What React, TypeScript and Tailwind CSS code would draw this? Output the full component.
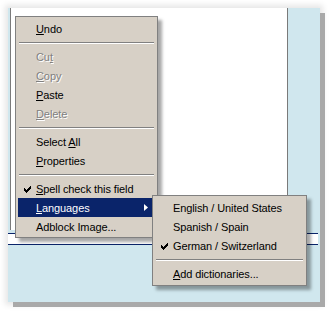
import { FC, ReactNode } from "react";

const Check: FC<{ white?: boolean }> = ({ white }) => (
  <svg width="7" height="7" viewBox="0 0 7 7" shapeRendering="crispEdges" className="block">
    <path
      d="M6 0h1v3h-1zM5 1h1v3h-1zM4 2h1v3h-1zM3 3h1v3h-1zM2 4h1v3h-1zM1 3h1v3h-1zM0 2h1v3h-1z"
      fill={white ? "#fff" : "#000"}
    />
  </svg>
);

const Arrow = () => (
  <svg width="4" height="7" viewBox="0 0 4 7" className="block">
    <polygon points="0,0 4,3.5 0,7" fill="#fff" />
  </svg>
);

interface ItemProps {
  children: ReactNode;
  disabled?: boolean;
  checked?: boolean;
  active?: boolean;
  submenu?: boolean;
  width: string;
}

const Item: FC<ItemProps> = ({ children, disabled, checked, active, submenu, width }) => (
  <div
    className={`relative flex h-[19px] items-center ${width} ${
      active ? "bg-[#0a246a] text-white" : disabled ? "text-[#808080] [text-shadow:1px_1px_0_#ffffff]" : "text-black"
    }`}
  >
    <span className="flex w-[18px] justify-center pl-[1px] pt-[1px]">{checked && <Check white={active} />}</span>
    <span className="flex-1 whitespace-nowrap pt-[2px] leading-none tracking-[-0.1px]">{children}</span>
    {submenu && (
      <span className="mr-[4px]">
        <Arrow />
      </span>
    )}
  </div>
);

const Separator: FC<{ width: string }> = ({ width }) => (
  <div className={`h-[9px] pt-[4px] ml-[1px] ${width}`}>
    <div className="h-[1px] bg-[#808080]" />
    <div className="h-[1px] bg-white" />
  </div>
);

export default function App() {
  return (
    <div className="relative h-[316px] w-[334px] overflow-hidden bg-white font-['Liberation_Sans',Arial,sans-serif] text-[11px]">
      {/* page behind the menus */}
      <div className="ml-[8px] mt-[8px] h-[294px] w-[312px] bg-[#d0e7ee] shadow-[5px_5px_0_#a9a9a9,0_0_6px_3px_#e6e6e6]">
        <div className="ml-[2px] h-[222px] w-[278px] border-x border-[#7a7a7a] bg-white" />
        <div className="mt-[3px] h-[12px] w-[310px] border-y border-[#0a246a] bg-white" />
      </div>

      {/* context menu */}
      <div className="absolute left-[15px] top-[16px] w-[143px] border border-[#808080] bg-[#d7d0c6] pl-[2px] pt-[2px] pb-[1px] shadow-[4px_4px_3px_rgba(0,0,0,0.35)]">
        <Item width="w-[134px]">
          <u>U</u>ndo
        </Item>
        <Separator width="w-[135px]" />
        <Item width="w-[134px]" disabled>
          Cu<u>t</u>
        </Item>
        <Item width="w-[134px]" disabled>
          <u>C</u>opy
        </Item>
        <Item width="w-[134px]">
          <u>P</u>aste
        </Item>
        <Item width="w-[134px]" disabled>
          <u>D</u>elete
        </Item>
        <Separator width="w-[135px]" />
        <Item width="w-[134px]">
          Select <u>A</u>ll
        </Item>
        <Item width="w-[134px]">
          <u>P</u>roperties
        </Item>
        <Separator width="w-[135px]" />
        <Item width="w-[134px]" checked>
          <u>S</u>pell check this field
        </Item>
        <Item width="w-[134px]" active submenu>
          <u>L</u>anguages
        </Item>
        <Item width="w-[134px]">Adblock Image...</Item>
      </div>

      {/* languages submenu */}
      <div className="absolute left-[152px] top-[195px] w-[155px] border border-[#808080] bg-[#d7d0c6] pl-[2px] pt-[2px] pb-[2px] shadow-[4px_4px_3px_rgba(0,0,0,0.35)]">
        <Item width="w-[148px]">English / United States</Item>
        <Item width="w-[148px]">Spanish / Spain</Item>
        <Item width="w-[148px]" checked>
          German / Switzerland
        </Item>
        <Separator width="w-[147px]" />
        <Item width="w-[148px]">
          <u>A</u>dd dictionaries...
        </Item>
      </div>
    </div>
  );
}
